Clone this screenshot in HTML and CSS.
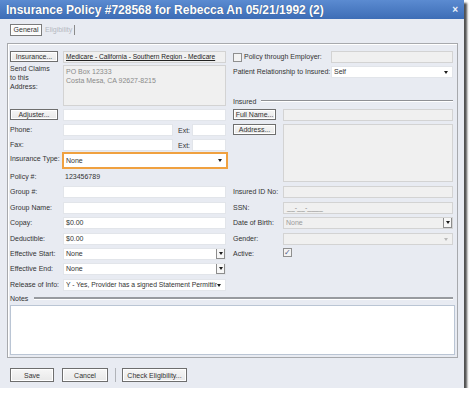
FILE: index.html
```html
<!DOCTYPE html>
<html lang="en">
<head>
  <meta charset="UTF-8">
  <meta name="viewport" content="width=device-width, initial-scale=1.0">
  <title>Insurance Policy</title>
  <link rel="stylesheet" href="styles.css">
</head>
<body>
  <div class="window">
    <div class="titlebar">
      <span class="title">Insurance Policy #728568 for Rebecca An 05/21/1992 (2)</span>
      <span class="close">×</span>
    </div>

    <div class="tabs">
      <span class="tab active">General</span>
      <span class="tab disabled">Eligibility</span>
    </div>

    <div class="frame">
      <div class="columns">
        <!-- left side: policy fields -->
        <div class="col-left">
          <button class="btn side">Insurance...</button>
          <div class="field gray link-field"><span class="link">Medicare - California - Southern Region - Medicare</span></div>

          <div class="label multi">Send Claims<br>to this<br>Address:</div>
          <div class="field gray address">PO Box 12333<br>Costa Mesa, CA 92627-8215</div>

          <button class="btn side">Adjuster...</button>
          <div class="field"></div>

          <div class="label">Phone:</div>
          <div class="split"><div class="field phone"></div><span class="ext">Ext:</span><div class="field ext-field"></div></div>

          <div class="label">Fax:</div>
          <div class="split"><div class="field phone"></div><span class="ext">Ext:</span><div class="field ext-field"></div></div>

          <div class="label">Insurance Type:</div>
          <div class="field select focus"><span>None</span><span class="arrow"></span></div>

          <div class="label">Policy #:</div>
          <div class="value">123456789</div>

          <div class="label">Group #:</div>
          <div class="field"></div>

          <div class="label">Group Name:</div>
          <div class="field"></div>

          <div class="label">Copay:</div>
          <div class="field">$0.00</div>

          <div class="label">Deductible:</div>
          <div class="field">$0.00</div>

          <div class="label">Effective Start:</div>
          <div class="field select"><span>None</span><span class="drop"><span class="arrow"></span></span></div>

          <div class="label">Effective End:</div>
          <div class="field select"><span>None</span><span class="drop"><span class="arrow"></span></span></div>

          <div class="label">Release of Info:</div>
          <div class="field select"><span class="clip">Y - Yes, Provider has a signed Statement Permitting</span><span class="arrow"></span></div>
        </div>

        <!-- right side: employer and insured person -->
        <div class="col-right">
          <div class="rrow">
            <span class="check"></span><span class="label">Policy through Employer:</span>
            <div class="field gray wide"></div>
          </div>
          <div class="rrow second">
            <span class="label">Patient Relationship to Insured:</span>
            <div class="field select wide"><span>Self</span><span class="arrow"></span></div>
          </div>

          <div class="group-head"><span>Insured</span><span class="rule"></span></div>

          <div class="insured">
            <button class="btn side2">Full Name...</button>
            <div class="field gray"></div>

            <button class="btn side2">Address...</button>
            <div class="field gray tall"></div>

            <div class="label">Insured ID No:</div>
            <div class="field gray"></div>

            <div class="label">SSN:</div>
            <div class="field gray mask">__-__-____</div>

            <div class="label">Date of Birth:</div>
            <div class="field gray select"><span class="muted">None</span><span class="drop"><span class="arrow"></span></span></div>

            <div class="label">Gender:</div>
            <div class="field gray select"><span></span><span class="arrow faint"></span></div>

            <div class="label">Active:</div>
            <div><span class="check on">✓</span></div>
          </div>
        </div>
      </div>

      <div class="notes-head"><span>Notes</span><span class="rule"></span></div>
      <div class="notes"></div>
    </div>

    <div class="actions">
      <button class="btn action save">Save</button>
      <button class="btn action cancel">Cancel</button>
      <span class="sep"></span>
      <button class="btn action eligibility">Check Eligibility...</button>
    </div>
  </div>
</body>
</html>
```

FILE: styles.css
```css
body {
  margin: 0;
  background: #fff;
  font-family: "Liberation Sans", Arial, sans-serif;
  font-size: 7px;
  color: #333;
}
.window {
  width: 464px;
  height: 388px;
  background: #e8ebf2;
  box-shadow: 3px 3px 2px rgba(50, 50, 50, 0.85);
}
.titlebar {
  height: 19px;
  background: linear-gradient(#5b8bd1, #3d6db6);
  display: flex;
  align-items: center;
  justify-content: space-between;
  padding: 0 6px;
}
.title {
  color: #fff;
  font-weight: bold;
  font-size: 12px;
  text-shadow: 0 0 1px rgba(0, 0, 0, 0.4);
}
.close {
  color: #eef3fb;
  font-weight: bold;
  font-size: 10px;
  margin-right: 0;
}
.tabs {
  display: flex;
  align-items: center;
  height: 12px;
  margin: 5px 0 0 10px;
}
.tab {
  height: 12px;
  line-height: 12px;
  box-sizing: border-box;
}
.tab.active {
  width: 32px;
  text-align: center;
  background: #fafafa;
  border: 1px solid #7b7b7b;
  box-shadow: inset 0 0 0 1px #fff;
  line-height: 10px;
}
.tab.disabled {
  color: #b4b8c0;
  padding: 0 2px 0 3px;
  border-right: 1px solid #8a8a8a;
  height: 10px;
  line-height: 10px;
}
.frame {
  box-sizing: border-box;
  width: 451px;
  height: 315px;
  margin: 7px 0 0 7px;
  border: 1px solid #a7a9ad;
  box-shadow: inset 1px 1px 0 #fff;
  padding: 7px 2px 0 2px;
}
.columns {
  display: flex;
  gap: 6px;
}
.col-left {
  width: 216px;
  display: grid;
  grid-template-columns: 53px 163px;
  grid-template-rows: 14px 44px 15px 15px 14px 18px 15px 16px 15px 16px 15px 15px 16px 14px;
  align-items: start;
}
.col-right {
  width: 221px;
}
.label {
  height: 12px;
  line-height: 12px;
  white-space: nowrap;
}
.label.multi {
  height: auto;
  line-height: 9px;
  margin-top: -1px;
}
.field {
  box-sizing: border-box;
  height: 12px;
  width: 100%;
  background: #fff;
  border: 1px solid #e2e5ea;
  line-height: 10px;
  padding: 0 2px;
  white-space: nowrap;
  overflow: hidden;
}
.field.gray {
  background: #f0f0f0;
  border-color: #d3d3d3;
  color: #8a8a8a;
}
.link-field {
  color: #222;
}
.link {
  text-decoration: underline;
  color: #222;
  font-size: 6.6px;
}
.address {
  height: 41px;
  line-height: 9px;
  padding-top: 1px;
}
.split {
  display: flex;
  align-items: center;
}
.phone {
  width: 110px;
}
.ext {
  width: 14px;
  margin-left: 5px;
}
.ext-field {
  width: 34px;
}
.value {
  height: 12px;
  line-height: 12px;
  padding-left: 2px;
}
.select {
  display: flex;
  align-items: center;
  justify-content: space-between;
  padding-right: 0;
}
.select.focus {
  width: 166px;
  height: 17px;
  margin: -1px 0 0 -1px;
  border: 2px solid #f0a140;
  padding-left: 2px;
  padding-right: 4px;
}
.arrow {
  width: 0;
  height: 0;
  border-left: 2.5px solid transparent;
  border-right: 2.5px solid transparent;
  border-top: 3px solid #1c1c1c;
  margin-right: 4px;
  flex-shrink: 0;
}
.select.focus .arrow {
  margin-right: 0;
}
.arrow.faint {
  border-top-color: #b9b9b9;
}
.drop {
  box-sizing: border-box;
  width: 10px;
  height: 12px;
  margin: -1px -1px -1px 0;
  background: #f7f7f7;
  border: 1px solid #8d8d8d;
  border-right-width: 2px;
  border-bottom-width: 2px;
  display: flex;
  align-items: center;
  justify-content: center;
}
.drop .arrow {
  margin: 0;
}
.clip {
  overflow: hidden;
  width: 153px;
  font-size: 6.8px;
}
.btn {
  box-sizing: border-box;
  font-family: inherit;
  font-size: 7px;
  color: #333;
  background: linear-gradient(#f6f6f6, #e8e8e8);
  border: 1px solid #6e6e6e;
  box-shadow: inset 0 0 0 1px #fff;
  padding: 0;
  margin: 0;
  line-height: 9px;
}
.btn.side {
  width: 48px;
  height: 11px;
  margin-top: 0;
}
.btn.side2 {
  width: 43px;
  height: 11px;
  margin-left: 1px;
}
.rrow {
  display: flex;
  align-items: center;
  height: 12px;
  padding-left: 1px;
}
.rrow.second {
  margin-top: 3px;
}
.rrow .wide {
  width: 122px;
  margin-left: auto;
}
.check {
  box-sizing: border-box;
  display: inline-block;
  width: 9px;
  height: 9px;
  border: 1px solid #8f8f8f;
  background: #f3f3f3;
  margin-right: 2px;
}
.check.on {
  font-size: 8px;
  line-height: 7px;
  text-align: center;
  color: #50608a;
  margin-top: 0;
}
.group-head {
  display: flex;
  align-items: center;
  height: 10px;
  margin: 18px 0 3px 1px;
}
.rule {
  flex: 1;
  margin-left: 5px;
  border-top: 1px solid #8e9094;
  border-bottom: 1px solid #fff;
}
.insured {
  display: grid;
  grid-template-columns: 51px 170px;
  grid-template-rows: 15px 62px 16px 15px 16px 15px 12px;
  align-items: start;
}
.insured .label {
  padding-left: 1px;
}
.tall {
  height: 58px;
}
.mask {
  color: #9a9a9a;
  padding-left: 3px;
}
.muted {
  color: #9a9a9a;
}
.notes-head {
  display: flex;
  align-items: center;
  height: 10px;
  margin-top: 0;
  padding-right: 2px;
}
.notes-head .rule {
  margin-left: 6px;
  border-top: 2px solid #979a9f;
}
.notes {
  box-sizing: border-box;
  width: 445px;
  height: 50px;
  margin-top: 2px;
  background: #fff;
  border: 1px solid #bac5d4;
}
.actions {
  display: flex;
  align-items: center;
  margin: 10px 0 0 10px;
}
.btn.action {
  height: 14px;
  margin-right: 8px;
}
.save {
  width: 44px;
}
.cancel {
  width: 46px;
}
.eligibility {
  width: 65px;
}
.sep {
  width: 1px;
  height: 14px;
  background: #b0b3b8;
  margin: 0 6px 0 -1px;
}
```
